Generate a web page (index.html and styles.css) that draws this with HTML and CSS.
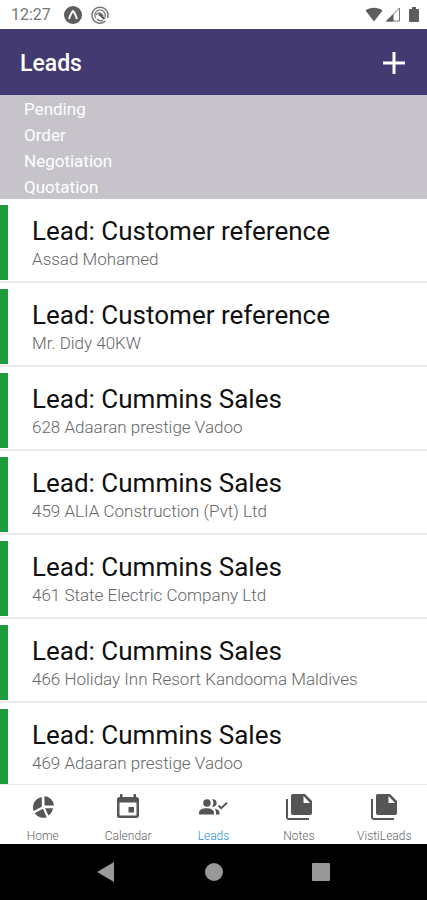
FILE: index.html
```html
<!DOCTYPE html>
<html lang="en">
<head>
<meta charset="utf-8">
<meta name="viewport" content="width=device-width, initial-scale=1">
<title>Leads</title>
<link rel="stylesheet" href="styles.css">
</head>
<body>
<div class="status-bar">
  <span class="clock">12:27</span>
  <svg width="18" height="18" viewBox="0 0 18 18"><circle cx="9" cy="9" r="9" fill="#5d5d5d"/><path d="M5 13C6.200 9.500 7.600 6.200 9 5c1.400 1.200 2.800 4.500 4 8" fill="none" stroke="#fff" stroke-width="2"/></svg>
  <svg width="18" height="18" viewBox="0 0 18 18" fill="none" stroke="#777"><path d="M14.500 15a8 8 0 1 1 2-3" stroke-width="1.500"/><path d="M4.500 12a5.300 5.300 0 1 1 9.300-.5" stroke-width="1.300"/><path d="M5 8.500c3-2.500 5.500-1.500 7 1.500M6 13c2 2 4 2.200 6 1.500" stroke-width="1.500"/><path d="m8 8 5.500 5" stroke="#555" stroke-width="2.200"/></svg>
  <span class="signals">
    <svg width="18" height="15" viewBox="0 0 18 15"><path d="M.5 3.500C5-.3 13-.3 17.500 3.500L9 14.500z" fill="#5d5d5d"/></svg>
    <svg width="16" height="15" viewBox="0 0 16 15"><path d="M1.500 14 14.500 1v13z" fill="none" stroke="#777"/><path d="M1 14.500 8.500 7v7.500z" fill="#5d5d5d"/></svg>
    <svg class="battery" width="10" height="15" viewBox="0 0 10 15"><path d="M3 0h4v2h2.200c.5 0 .8.300.8.800V14c0 .6-.3 1-.8 1H.8c-.5 0-.8-.4-.8-1V2.800C0 2.300.3 2 .8 2H3z" fill="#5d5d5d"/></svg>
  </span>
</div>
<header class="app-bar">
  <h1>Leads</h1>
  <button class="add" type="button" aria-label="Add lead"><svg width="22" height="22" viewBox="0 0 22 22"><path d="M11 0v22M0 11h22" stroke="#fff" stroke-width="3"/></svg></button>
</header>
<ul class="stages">
  <li>Pending</li>
  <li>Order</li>
  <li>Negotiation</li>
  <li>Quotation</li>
</ul>
<main class="leads">
  <article class="lead"><h2>Lead: Customer reference</h2><p>Assad Mohamed</p></article>
  <article class="lead"><h2>Lead: Customer reference</h2><p>Mr. Didy 40KW</p></article>
  <article class="lead"><h2>Lead: Cummins Sales</h2><p>628 Adaaran prestige Vadoo</p></article>
  <article class="lead"><h2>Lead: Cummins Sales</h2><p>459 ALIA Construction (Pvt) Ltd</p></article>
  <article class="lead"><h2>Lead: Cummins Sales</h2><p>461 State Electric Company Ltd</p></article>
  <article class="lead"><h2>Lead: Cummins Sales</h2><p>466 Holiday Inn Resort Kandooma Maldives</p></article>
  <article class="lead"><h2>Lead: Cummins Sales</h2><p>469 Adaaran prestige Vadoo</p></article>
</main>
<nav class="tabs">
  <a href="#home"><svg width="28" height="28" viewBox="0 0 28 28" fill="#555"><path d="M15.500 3A10.500 10.500 0 0 1 25 12.500h-9.500z"/><path d="M12.800 4v9.700L4.600 18A10.600 10.600 0 0 1 12.800 4z"/><path d="M5.800 20.200l8.200-4.500 3.700 8.500A10.500 10.500 0 0 1 5.800 20.200z"/><path d="M16 15.300h8a10.500 10.500 0 0 1-4.600 7.200z"/></svg><span>Home</span></a>
  <a href="#calendar"><svg width="28" height="28" viewBox="0 0 28 28"><path fill="#555" fill-rule="evenodd" d="M6 1h2.500v3h11V1H22v3h.500c1.400 0 2.500 1 2.500 2.300v16.200c0 1.400-1.100 2.500-2.500 2.500h-17A2.500 2.500 0 0 1 3 22.500V6.300C3 5 4.100 4 5.500 4H6zM5.500 9.500v13h17v-13zM14.500 14H20v5.500h-5.500z"/></svg><span>Calendar</span></a>
  <a class="active" href="#leads"><svg width="30" height="28" viewBox="0 0 30 28" fill="#555"><circle cx="9" cy="10" r="3.800"/><path d="M1 21.500v-1.600c0-3.200 3.700-4.600 7.500-4.600s7.500 1.400 7.500 4.600v1.600zM14 6.300c2.600-.6 4.700 1.200 4.700 3.700s-2.100 4.300-4.700 3.700c1.900-2.500 1.900-4.900 0-7.400zM16.500 15.500c3.300.6 5 2.200 5 4.400v1.600H18v-1.600c0-1.800-.5-3.200-1.500-4.400z"/><path d="m20.500 12.500 2.700 2.700 5.800-5.400" fill="none" stroke="#555" stroke-width="2"/></svg><span>Leads</span></a>
  <a href="#notes"><svg width="28" height="28" viewBox="0 0 28 28" fill="#555"><path d="M1 6h2v18c0 .6.400 1 1 1h20v2H4c-1.700 0-3-1.300-3-3z"/><path fill-rule="evenodd" d="M8 1h12l7 7v12c0 1.300-.7 2-2 2H8c-1.300 0-2-.7-2-2V3c0-1.300.7-2 2-2zm10.500 2v7h6.500z"/></svg><span>Notes</span></a>
  <a href="#visits"><svg width="28" height="28" viewBox="0 0 28 28" fill="#555"><path d="M1 6h2v18c0 .6.400 1 1 1h20v2H4c-1.700 0-3-1.300-3-3z"/><path fill-rule="evenodd" d="M8 1h12l7 7v12c0 1.300-.7 2-2 2H8c-1.300 0-2-.7-2-2V3c0-1.300.7-2 2-2zm10.500 2v7h6.500z"/></svg><span>VistiLeads</span></a>
</nav>
<div class="system-nav">
  <button type="button" aria-label="Back"><svg width="20" height="20" viewBox="0 0 20 20"><path d="M0 10 17 0v20z" fill="#999"/></svg></button>
  <button type="button" aria-label="Home screen"><svg width="20" height="20" viewBox="0 0 20 20"><circle cx="10" cy="10" r="9" fill="#999"/></svg></button>
  <button type="button" aria-label="Recent apps"><svg width="20" height="20" viewBox="0 0 20 20"><rect x="1" y="1" width="18" height="18" rx="1" fill="#999"/></svg></button>
</div>
</body>
</html>
```
FILE: styles.css
```css
* { box-sizing: border-box; }
body {
  margin: 0;
  min-height: 100vh;
  display: flex;
  flex-direction: column;
  background: #fff;
  font-family: Roboto, "Liberation Sans", sans-serif;
}
h1, h2, p, ul { margin: 0; padding: 0; }
svg { display: block; }
button { background: none; border: 0; padding: 0; }
.status-bar {
  display: flex;
  align-items: center;
  gap: 9px;
  height: 29px;
  padding: 0 8px 0 11px;
}
.clock { font-size: 16px; line-height: 20px; color: #777; margin-right: 4px; padding-top: 1px; }
.signals { display: flex; gap: 2px; margin-left: auto; }
.battery { margin-left: 6px; }
.app-bar {
  display: flex;
  align-items: center;
  justify-content: space-between;
  padding: 19px 22px 17px 20px;
  background: #433a72;
  color: #fff;
}
h1 { font-size: 23px; line-height: 30px; font-weight: 500; padding-top: 1px; margin-bottom: -1px; }
.stages {
  list-style: none;
  padding-left: 24px;
  background: #c6c4ca;
  color: #fff;
  font-size: 17px;
  line-height: 26px;
}
.stages li { padding-top: 1px; margin-bottom: -1px; }
.leads { flex: 1; }
.lead {
  padding: 6px 0 1px;
  border-bottom: 2px solid #ebebeb;
}
.lead h2, .lead p { border-left: 8px solid #1f9b3d; padding-left: 24px; }
.lead h2 { padding-top: 9px; font-size: 26px; line-height: 35px; font-weight: 400; color: #111; }
.lead p { padding-bottom: 11px; font-size: 17px; line-height: 20px; font-weight: 300; color: #666; }
.lead:last-child { padding-bottom: 0; border-bottom-width: 1px; }
.tabs { display: grid; grid-template-columns: repeat(5, 1fr); padding: 8px 0 0; }
.tabs a {
  display: flex;
  flex-direction: column;
  align-items: center;
  gap: 7px;
  color: #666;
  font-size: 12px;
  line-height: 16px;
  font-weight: 300;
  text-decoration: none;
}
.tabs a.active { color: #2490e8; }
.system-nav {
  display: grid;
  grid-template-columns: repeat(3, 1fr);
  padding: 18px 53px;
  background: #000;
}
.system-nav button { display: flex; justify-content: center; }
```
